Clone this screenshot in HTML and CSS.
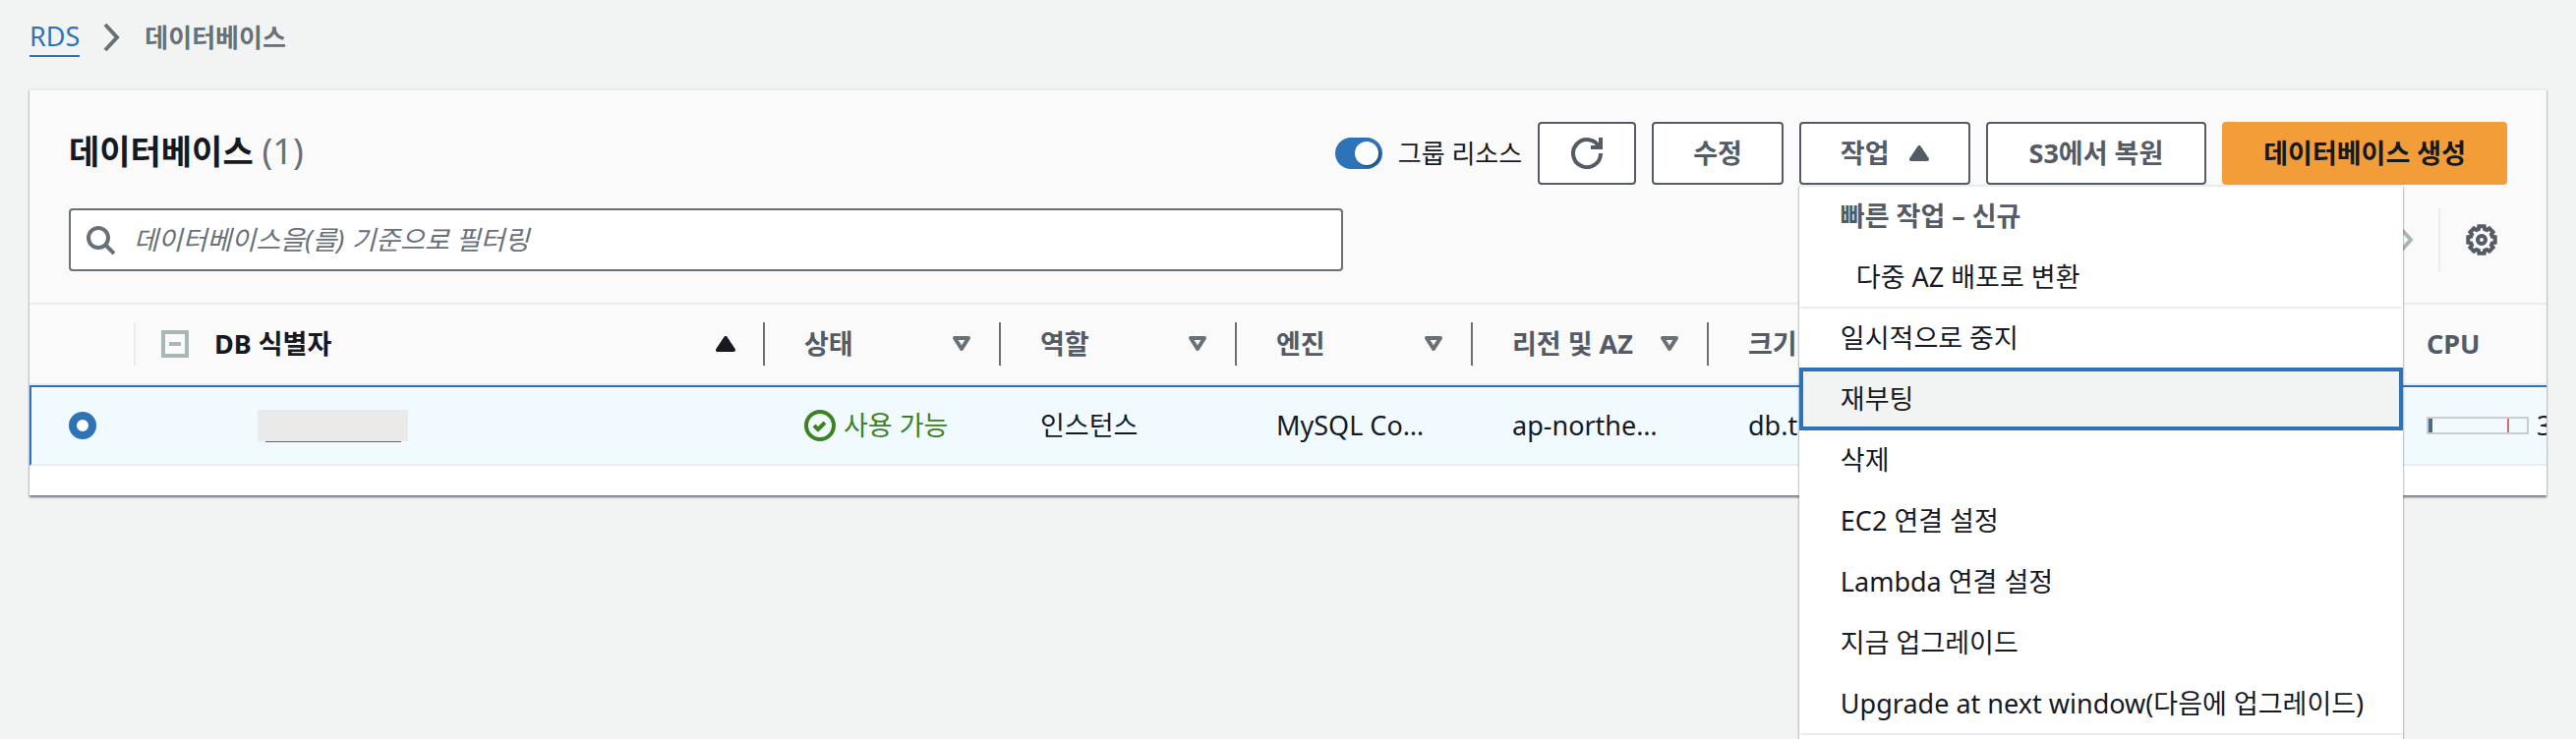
FILE: index.html
```html
<!DOCTYPE html>
<html lang="ko">
<head>
<meta charset="utf-8">
<title>RDS 데이터베이스</title>
<link rel="stylesheet" href="styles.css">
</head>
<body>
<nav class="breadcrumb">
  <a href="#">RDS</a>
  <svg class="breadcrumb-sep" viewBox="0 0 18 30"><path d="M2 2l12 13L2 28"/></svg>
  <span class="breadcrumb-current">데이터베이스</span>
</nav>

<main class="panel">
  <header class="panel-header">
    <div class="title-row">
      <h1>데이터베이스 <span class="count">(1)</span></h1>
      <div class="actions">
        <label class="toggle"><input type="checkbox" role="switch" checked>그룹 리소스</label>
        <button class="btn btn-icon" aria-label="새로 고침">
          <svg class="icon" viewBox="0 0 16 16"><path d="M10 5h5V0"/><path d="M15 8a7 7 0 1 1-.7-3"/></svg>
        </button>
        <button class="btn">수정</button>
        <div class="dropdown">
          <button class="btn btn-menu" aria-expanded="true">작업
            <svg class="caret caret-solid" viewBox="0 0 20 16"><path d="M2 14h16L10 2z"/></svg>
          </button>
          <ul class="menu">
            <li class="menu-heading">빠른 작업 – 신규</li>
            <li class="menu-end"><button class="menu-sub">다중 AZ 배포로 변환</button></li>
            <li><button>일시적으로 중지</button></li>
            <li class="menu-active"><button>재부팅</button></li>
            <li><button>삭제</button></li>
            <li><button>EC2 연결 설정</button></li>
            <li><button>Lambda 연결 설정</button></li>
            <li><button>지금 업그레이드</button></li>
            <li class="menu-end"><button>Upgrade at next window(다음에 업그레이드)</button></li>
          </ul>
        </div>
        <button class="btn btn-wide">S3에서 복원</button>
        <button class="btn btn-primary">데이터베이스 생성</button>
      </div>
    </div>
    <div class="filter-row">
      <label class="search">
        <svg class="icon" viewBox="0 0 16 16"><circle cx="7" cy="7" r="5"/><path d="M15 15l-4.500-4.500"/></svg>
        <input type="text" placeholder="데이터베이스을(를) 기준으로 필터링" aria-label="필터">
      </label>
      <div class="tools">
        <button class="tool page-next" aria-label="다음 페이지">
          <svg viewBox="0 0 18 30"><path d="M4 4l10 11L4 26"/></svg>
        </button>
        <div class="settings">
          <button class="tool" aria-label="기본 설정">
            <svg class="gear" viewBox="0 0 32 32"><path d="M29.700 18.700L26.800 19.200 25.900 21.400 27.600 23.800 23.800 27.600 21.400 25.900 19.200 26.800 18.700 29.700H13.300L12.800 26.800 10.600 25.900 8.200 27.600 4.400 23.800 6.100 21.400 5.200 19.200 2.300 18.700V13.300L5.200 12.800 6.100 10.600 4.400 8.200 8.200 4.400 10.600 6.100 12.800 5.200 13.300 2.300H18.700L19.200 5.200 21.400 6.100 23.800 4.400 27.600 8.200 25.900 10.600 26.800 12.800 29.700 13.300Z"/><circle cx="16" cy="16" r="4"/></svg>
          </button>
        </div>
      </div>
    </div>
  </header>

  <div class="table-wrap">
    <table>
      <colgroup>
        <col class="col-select"><col class="col-id"><col class="col"><col class="col"><col class="col"><col class="col"><col class="col"><col class="col-wide"><col class="col">
      </colgroup>
      <thead>
        <tr>
          <th aria-label="선택"><div class="head head-select"></div></th>
          <th><div class="head head-id">
            <button class="collapse" aria-label="모두 접기"></button>
            <span class="head-text">DB 식별자</span>
            <svg class="caret caret-solid" viewBox="0 0 20 16"><path d="M2 14h16L10 2z"/></svg>
          </div></th>
          <th><div class="head"><span class="head-text">상태</span><svg class="caret" viewBox="0 0 20 16"><path d="M3 2h14l-7 11z"/></svg></div></th>
          <th><div class="head"><span class="head-text">역할</span><svg class="caret" viewBox="0 0 20 16"><path d="M3 2h14l-7 11z"/></svg></div></th>
          <th><div class="head"><span class="head-text">엔진</span><svg class="caret" viewBox="0 0 20 16"><path d="M3 2h14l-7 11z"/></svg></div></th>
          <th><div class="head"><span class="head-text">리전 및 AZ</span><svg class="caret" viewBox="0 0 20 16"><path d="M3 2h14l-7 11z"/></svg></div></th>
          <th><div class="head"><span class="head-text">크기</span></div></th>
          <th></th>
          <th><div class="head"><span class="head-text">CPU</span></div></th>
        </tr>
      </thead>
      <tbody>
        <tr>
          <td class="cell-select"><input class="radio" type="radio" name="db" checked aria-label="데이터베이스 선택"></td>
          <td class="cell-id"><a class="masked" href="#" aria-label="데이터베이스"><span class="mask"></span></a></td>
          <td><span class="status"><svg class="icon" viewBox="0 0 16 16"><circle cx="8" cy="8" r="7"/><path d="M5 8l2 2 3.500-3.500"/></svg>사용 가능</span></td>
          <td>인스턴스</td>
          <td>MySQL Co…</td>
          <td>ap-northe…</td>
          <td>db.t</td>
          <td></td>
          <td><span class="cpu"><span class="meter"><span class="meter-value"></span><span class="meter-limit"></span></span>3</span></td>
        </tr>
      </tbody>
    </table>
  </div>
</main>
</body>
</html>
```

FILE: styles.css
```css
* {
  box-sizing: border-box;
}

body {
  margin: 0;
  height: 100vh;
  overflow: hidden;
  background: #f2f3f3;
  color: #16191f;
  font: 27px/44px "Noto Sans", "Noto Sans CJK KR", sans-serif;
}

button,
input {
  margin: 0;
  font: inherit;
  color: inherit;
}

button {
  border: 0;
  padding: 0;
  background: none;
  cursor: pointer;
}

svg {
  display: block;
  flex: none;
  fill: none;
  stroke: currentColor;
}

.icon {
  width: 32px;
  height: 32px;
  stroke-width: 2;
}

.caret {
  width: 20px;
  height: 16px;
  stroke-width: 4;
  stroke-linejoin: round;
  color: #687078;
}

.caret-solid {
  fill: currentColor;
  color: inherit;
}

.breadcrumb {
  display: flex;
  align-items: center;
  padding: 16px 30px 30px;
  color: #687078;
}

.breadcrumb a {
  border-bottom: 2px solid #2e73b8;
  color: #2e73b8;
  line-height: 38px;
  text-decoration: none;
}

.breadcrumb-sep {
  width: 18px;
  height: 30px;
  margin: 0 24px;
  stroke-width: 4;
}

.breadcrumb-current {
  font-size: 26px;
  font-weight: 700;
}

.panel {
  margin: 0 30px;
  border-top: 2px solid #eaeded;
  padding-bottom: 30px;
  background: #fff;
  box-shadow: 0 2px 2px #545b6499, 0 2px 2px #545b6466;
}

.panel-header {
  padding: 32px 40px;
  border-bottom: 2px solid #eaeded;
  background: #fafafa;
}

.title-row,
.filter-row,
.actions,
.toggle,
.tools {
  display: flex;
  align-items: center;
}

.title-row,
.filter-row {
  justify-content: space-between;
}

h1 {
  margin: 0 0 4px;
  font-size: 34px;
  font-weight: 700;
}

.count {
  color: #687078;
  font-size: 36px;
  font-weight: 400;
}

.actions {
  gap: 16px;
}

.toggle {
  gap: 16px;
  font-size: 26px;
}

.toggle input {
  display: flex;
  align-items: center;
  justify-content: flex-end;
  width: 48px;
  height: 32px;
  padding: 4px;
  border-radius: 16px;
  background: #2e73b8;
  appearance: none;
}

.toggle input::before {
  content: "";
  width: 24px;
  height: 24px;
  border-radius: 50%;
  background: #fff;
  box-shadow: 2px 2px 2px #16191f66;
}

.btn {
  display: flex;
  align-items: center;
  height: 64px;
  padding: 0 40px;
  border: 2px solid #545b64;
  border-radius: 4px;
  background: #fff;
  color: #545b64;
  font-weight: 700;
  white-space: nowrap;
}

.btn-icon {
  padding: 0 32px;
}

.btn-wide {
  padding: 0 42px;
}

.btn-menu {
  gap: 20px;
}

.btn-primary {
  border-color: #f29d38;
  background: #f29d38;
  color: #16191f;
}

.dropdown {
  position: relative;
}

.menu {
  position: absolute;
  z-index: 1;
  top: 100%;
  left: 0;
  margin: 0;
  padding: 0 0 64px;
  border-top: 2px solid #eaeded;
  background: #fff;
  box-shadow: 0 2px 2px #545b6499, 0 2px 2px #545b6466;
  list-style: none;
  white-space: nowrap;
}

.menu li {
  height: 64px;
  margin-top: -2px;
  border: 2px solid transparent;
}

.menu .menu-heading {
  padding: 8px 40px;
  color: #545b64;
  font-weight: 700;
}

.menu button {
  width: 100%;
  height: 60px;
  padding: 0 38px 0 40px;
  text-align: left;
}

.menu .menu-sub {
  padding-left: 56px;
}

.menu .menu-end {
  border-bottom-color: #eaeded;
}

.menu .menu-active {
  position: relative;
  border: 4px solid #2e73b8;
  background: #f2f3f3;
}

.menu .menu-active button {
  height: 56px;
  padding: 0 38px;
}

.filter-row {
  margin-top: 24px;
}

.search {
  display: flex;
  flex: 0 1 1296px;
  align-items: center;
  gap: 18px;
  height: 64px;
  padding: 0 14px;
  border: 2px solid #687078;
  border-radius: 4px;
  background: #fff;
  color: #687078;
}

.search input {
  flex: 1;
  min-width: 0;
  border: 0;
  outline: 0;
  padding: 0;
  background: none;
}

.search input::placeholder {
  color: #687078;
  font-style: italic;
  opacity: 1;
}

.tools {
  gap: 24px;
}

.page-next svg {
  width: 18px;
  height: 30px;
  stroke-width: 4;
  color: #aab7b8;
}

.settings {
  display: flex;
  align-items: center;
  height: 64px;
  padding: 0 10px 0 26px;
  border-left: 2px solid #eaeded;
}

.gear {
  width: 32px;
  height: 32px;
  stroke-width: 4;
  color: #545b64;
}

.table-wrap {
  overflow: hidden;
}

table {
  width: 2638px;
  border-spacing: 0;
  table-layout: fixed;
}

.col-select {
  width: 108px;
}

.col-id {
  width: 640px;
}

.col {
  width: 240px;
}

.col-wide {
  width: 450px;
}

th {
  padding: 18px 0;
  border-bottom: 2px solid #eaeded;
  background: #fafafa;
  color: #545b64;
  text-align: left;
}

.head {
  display: flex;
  align-items: center;
  height: 44px;
  padding: 0 28px 0 40px;
  border-right: 2px solid #687078;
}

.head-select {
  border-color: #eaeded;
}

.head-id {
  gap: 26px;
  padding-left: 26px;
  color: #16191f;
}

.head-text {
  flex: 1;
  white-space: nowrap;
}

.collapse {
  display: grid;
  place-items: center;
  width: 28px;
  height: 28px;
  border: 4px solid #aab7b8;
}

.collapse::before {
  content: "";
  width: 12px;
  height: 4px;
  background: #aab7b8;
}

td {
  height: 82px;
  padding: 0 0 0 40px;
  border-top: 2px solid #2e73b8;
  border-bottom: 2px solid #eaeded;
  background: #f1faff;
  white-space: nowrap;
}

.cell-select {
  padding-left: 38px;
  border-left: 2px solid #2e73b8;
}

.radio {
  display: block;
  width: 28px;
  height: 28px;
  border: 8px solid #2e73b8;
  border-radius: 50%;
  background: #fff;
  appearance: none;
}

.cell-id {
  padding-left: 124px;
}

.masked {
  display: grid;
  justify-items: center;
  width: 153px;
}

.masked::after {
  content: "";
  width: 138px;
  height: 1px;
  background: #2e73b8;
}

.mask {
  width: 100%;
  height: 32px;
  background: #eaeaea;
}

.status {
  display: flex;
  align-items: center;
  gap: 8px;
  color: #3c8220;
}

.cpu {
  display: flex;
  align-items: center;
  gap: 8px;
}

.meter {
  display: flex;
  justify-content: space-between;
  width: 104px;
  height: 18px;
  padding-right: 18px;
  border: 2px solid #ccc;
}

.meter-value {
  width: 4px;
  background: #486c8f;
}

.meter-limit {
  width: 2px;
  background: #d46a6a;
}
```
